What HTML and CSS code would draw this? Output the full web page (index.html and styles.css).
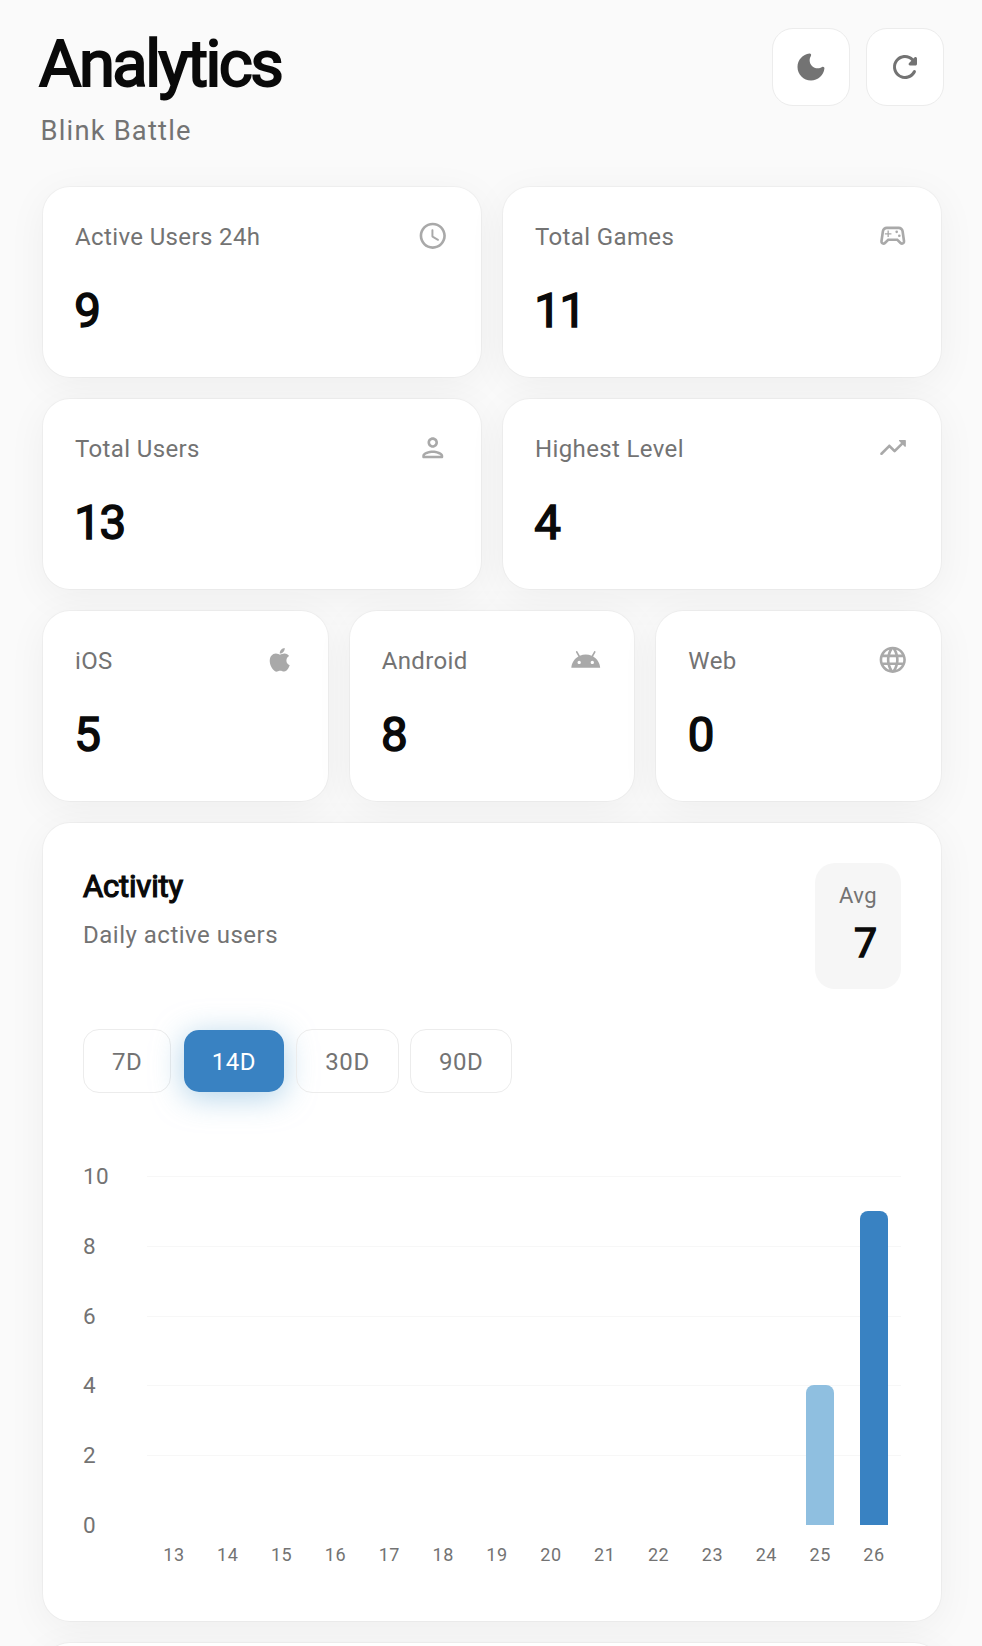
FILE: index.html
```html
<!DOCTYPE html>
<html lang="en">
<head>
  <meta charset="UTF-8">
  <meta name="viewport" content="width=device-width, initial-scale=1.0">
  <title>Analytics - Blink Battle</title>
  <link rel="stylesheet" href="styles.css">
</head>

<body>

  <!-- Header -->
  <header class="header">
    <div class="heading">
      <h1>Analytics</h1>
      <p>Blink Battle</p>
    </div>
    <div class="actions">
      <button class="icon-btn" aria-label="Dark mode">
        <svg viewBox="0 0 24 24"><path d="M11.01 3.05C6.51 3.54 3 7.36 3 12c0 4.97 4.03 9 9 9 4.63 0 8.45-3.5 8.95-8 .09-.79-.78-1.42-1.54-.95-.84.54-1.84.85-2.91.85-2.98 0-5.4-2.42-5.4-5.4 0-1.06.31-2.06.84-2.89.45-.67-.04-1.63-.93-1.56z"/></svg>
      </button>
      <button class="icon-btn" aria-label="Refresh">
        <svg viewBox="0 0 24 24"><path d="M17.65 6.35c-1.63-1.63-3.94-2.57-6.48-2.31-3.67.37-6.69 3.35-7.1 7.02C3.52 15.91 7.27 20 12 20c3.19 0 5.93-1.87 7.21-4.56.32-.67-.16-1.44-.9-1.44-.37 0-.72.2-.88.53-1.13 2.43-3.84 3.97-6.8 3.31-2.22-.49-4.01-2.3-4.48-4.52C5.31 9.44 8.26 6 12 6c1.66 0 3.14.69 4.22 1.78l-1.51 1.51c-.63.63-.19 1.71.7 1.71H19c.55 0 1-.45 1-1V6.41c0-.89-1.08-1.34-1.71-.71l-.64.65z"/></svg>
      </button>
    </div>
  </header>

  <main class="content">
    <!-- Stats -->
    <div class="row">
      <div class="card stat">
        <div class="stat-head">
          <span>Active Users 24h</span>
          <svg viewBox="0 0 24 24"><path d="M11.99 2C6.47 2 2 6.48 2 12s4.47 10 9.99 10C17.52 22 22 17.52 22 12S17.52 2 11.99 2zM12 20c-4.42 0-8-3.58-8-8s3.58-8 8-8 8 3.58 8 8-3.58 8-8 8zm-.22-13h-.06c-.4 0-.72.32-.72.72v4.72c0 .35.18.68.49.86l4.15 2.49c.34.2.78.1.98-.24.21-.34.1-.79-.25-.99l-3.87-2.3V7.72c0-.4-.32-.72-.72-.72z"/></svg>
        </div>
        <div class="value">9</div>
      </div>
      <div class="card stat">
        <div class="stat-head">
          <span>Total Games</span>
          <svg viewBox="0 0 24 24"><path d="M21.58 16.09l-1.09-7.66C20.21 6.46 18.52 5 16.53 5H7.47C5.48 5 3.79 6.46 3.51 8.43l-1.09 7.66C2.2 17.63 3.39 19 4.94 19c.68 0 1.32-.27 1.8-.75L9 16h6l2.25 2.25c.48.48 1.13.75 1.8.75 1.56 0 2.75-1.37 2.53-2.91zm-2.1.72c-.08.1-.2.19-.42.19-.15 0-.29-.06-.39-.16L15.83 14H8.17l-2.84 2.84c-.1.1-.24.16-.39.16-.22 0-.34-.09-.42-.19s-.16-.24-.12-.44l1.09-7.66C5.63 7.74 6.48 7 7.47 7h9.06c.99 0 1.84.74 1.98 1.72l1.09 7.66c.03.2-.05.34-.12.43z"/><path d="M9 8H8v2H6v1h2v2h1v-2h2v-1H9z"/><circle cx="17" cy="12" r="1"/><circle cx="15" cy="9" r="1"/></svg>
        </div>
        <div class="value">11</div>
      </div>
    </div>

    <div class="row">
      <div class="card stat">
        <div class="stat-head">
          <span>Total Users</span>
          <svg viewBox="0 0 24 24"><path d="M12 12c2.21 0 4-1.79 4-4s-1.79-4-4-4-4 1.79-4 4 1.79 4 4 4zm0-6c1.1 0 2 .9 2 2s-.9 2-2 2-2-.9-2-2 .9-2 2-2zm0 8c-2.67 0-8 1.34-8 4v1c0 .55.45 1 1 1h14c.55 0 1-.45 1-1v-1c0-2.66-5.33-4-8-4zm6 4H6v-.01c.2-.72 3.3-1.99 6-1.99s5.8 1.29 6 2z"/></svg>
        </div>
        <div class="value">13</div>
      </div>
      <div class="card stat">
        <div class="stat-head">
          <span>Highest Level</span>
          <svg viewBox="0 0 24 24"><path d="M16.85 6.85l1.44 1.44-4.88 4.88-3.29-3.29c-.39-.39-1.02-.39-1.41 0l-6 6.01c-.39.39-.39 1.02 0 1.41.39.39 1.02.39 1.41 0L9.41 12l3.29 3.29c.39.39 1.02.39 1.41 0l5.59-5.58 1.44 1.44c.31.31.85.09.85-.35V6.5c.01-.28-.21-.5-.49-.5h-4.29c-.45 0-.67.54-.36.85z"/></svg>
        </div>
        <div class="value">4</div>
      </div>
    </div>

    <!-- Platforms -->
    <div class="row">
      <div class="card stat">
        <div class="stat-head">
          <span>iOS</span>
          <svg viewBox="0 0 24 24"><path d="M17.05 20.28c-.98.95-2.05.88-3.08.4-1.09-.5-2.08-.48-3.24 0-1.44.62-2.2.44-3.06-.4C2.79 15.25 3.51 7.59 9.05 7.31c1.35.07 2.29.74 3.08.8 1.18-.24 2.31-.93 3.57-.84 1.51.12 2.65.72 3.4 1.8-3.12 1.87-2.38 5.98.48 7.13-.57 1.5-1.31 2.99-2.54 4.09zM12.03 7.25c-.15-2.23 1.66-4.07 3.74-4.25.29 2.58-2.34 4.5-3.74 4.25z"/></svg>
        </div>
        <div class="value">5</div>
      </div>
      <div class="card stat">
        <div class="stat-head">
          <span>Android</span>
          <svg viewBox="0 0 24 24"><path d="M17.6 9.48l1.84-3.18c.16-.31.04-.69-.26-.85-.29-.15-.65-.06-.83.22l-1.88 3.24c-2.86-1.21-6.08-1.21-8.94 0L5.65 5.67c-.19-.29-.58-.38-.87-.2-.28.18-.37.54-.22.83L6.4 9.48C3.3 11.25 1.28 14.44 1 18h22c-.28-3.56-2.3-6.75-5.4-8.52zM7 15.25c-.69 0-1.25-.56-1.25-1.25s.56-1.25 1.25-1.25 1.25.56 1.25 1.25-.56 1.25-1.25 1.25zm10 0c-.69 0-1.25-.56-1.25-1.25s.56-1.25 1.25-1.25 1.25.56 1.25 1.25-.56 1.25-1.25 1.25z"/></svg>
        </div>
        <div class="value">8</div>
      </div>
      <div class="card stat">
        <div class="stat-head">
          <span>Web</span>
          <svg viewBox="0 0 24 24"><path d="M11.99 2C6.47 2 2 6.48 2 12s4.47 10 9.99 10C17.52 22 22 17.52 22 12S17.52 2 11.99 2zm6.93 6h-2.95c-.32-1.25-.78-2.45-1.38-3.56 1.84.63 3.37 1.91 4.33 3.56zM12 4.04c.83 1.2 1.48 2.53 1.91 3.96h-3.82c.43-1.43 1.08-2.76 1.91-3.96zM4.26 14C4.1 13.36 4 12.69 4 12s.1-1.36.26-2h3.38c-.08.66-.14 1.32-.14 2s.06 1.34.14 2H4.26zm.82 2h2.95c.32 1.25.78 2.45 1.38 3.56-1.84-.63-3.37-1.9-4.33-3.56zm2.95-8H5.08c.96-1.66 2.49-2.93 4.33-3.56C8.81 5.55 8.35 6.75 8.03 8zM12 19.96c-.83-1.2-1.48-2.53-1.91-3.96h3.82c-.43 1.43-1.08 2.76-1.91 3.96zM14.34 14H9.66c-.09-.66-.16-1.32-.16-2s.07-1.35.16-2h4.68c.09.65.16 1.32.16 2s-.07 1.34-.16 2zm.25 5.56c.6-1.11 1.06-2.31 1.38-3.56h2.95c-.96 1.65-2.49 2.93-4.33 3.56zM16.36 14c.08-.66.14-1.32.14-2s-.06-1.34-.14-2h3.38c.16.64.26 1.31.26 2s-.1 1.36-.26 2h-3.38z"/></svg>
        </div>
        <div class="value">0</div>
      </div>
    </div>

    <!-- Activity chart -->
    <section class="card activity">
      <div class="activity-head">
        <div>
          <h2>Activity</h2>
          <p>Daily active users</p>
        </div>
        <div class="avg">
          <span>Avg</span>
          <strong>7</strong>
        </div>
      </div>

      <div class="ranges">
        <button class="range">7D</button>
        <button class="range active">14D</button>
        <button class="range">30D</button>
        <button class="range">90D</button>
      </div>

      <div class="chart">
        <div class="y-axis">
          <span>10</span>
          <span>8</span>
          <span>6</span>
          <span>4</span>
          <span>2</span>
          <span>0</span>
        </div>
        <div class="plot">
          <div class="grid-lines"><i></i><i></i><i></i><i></i><i></i></div>
          <div class="bars">
            <div class="bar past" style="height: 40%"></div>
            <div class="bar today" style="height: 90%"></div>
          </div>
        </div>
        <div class="x-axis">
          <span>13</span>
          <span>14</span>
          <span>15</span>
          <span>16</span>
          <span>17</span>
          <span>18</span>
          <span>19</span>
          <span>20</span>
          <span>21</span>
          <span>22</span>
          <span>23</span>
          <span>24</span>
          <span>25</span>
          <span>26</span>
        </div>
      </div>
    </section>

    <!-- Next section, continues below the fold -->
    <section class="card next"></section>
  </main>

</body>
</html>
```
FILE: styles.css
```css
* {
    box-sizing: border-box;
    margin: 0;
    padding: 0;
}

body {
    height: 1646px;
    overflow: hidden;
    background: #fafafa;
    color: #0a0a0a;
    font-family: Roboto, sans-serif;
    font-weight: 400;
}

svg {
    display: block;
    fill: currentColor;
}

button {
    font-family: inherit;
    background: #fff;
    border: 1px solid #ececec;
}

/* Header */
.header {
    display: flex;
    justify-content: space-between;
    align-items: flex-start;
    height: 187px;
    padding: 28px 38px 0 39px;
}

h1 {
    margin-top: -1px;
    font-size: 65px;
    font-weight: 400;
    line-height: 74px;
    letter-spacing: -2.5px;
    -webkit-text-stroke: 2px #0a0a0a;
}

.heading p {
    margin-top: 13px;
    padding-left: 1.5px;
    font-size: 27.3px;
    line-height: 34px;
    letter-spacing: 1.2px;
    color: #737373;
}

.actions {
    display: flex;
    gap: 16px;
}

.icon-btn {
    display: flex;
    align-items: center;
    justify-content: center;
    width: 78px;
    height: 78px;
    border-radius: 21px;
    color: #737373;
}

.icon-btn svg {
    width: 36px;
    height: 36px;
}

/* Cards */
.content {
    display: flex;
    flex-direction: column;
    gap: 22px;
    padding: 0 41px 0 43px;
}

.row {
    display: flex;
    gap: 22px;
}

.card {
    background: #fff;
    border-radius: 27px;
    box-shadow: 0 0 0 1px rgba(0, 0, 0, 0.03), 0 8px 40px rgba(0, 0, 0, 0.05);
}

.stat {
    flex: 1;
    height: 190px;
    padding: 33px 32px;
}

.stat-head {
    display: flex;
    justify-content: space-between;
    align-items: center;
    height: 32px;
    font-size: 24px;
    letter-spacing: 0.37px;
    color: #737373;
}

.stat-head span {
    padding-top: 2px;
}

.stat-head svg {
    width: 31.5px;
    height: 31.5px;
    margin-right: 0.5px;
    color: #a9a9a9;
}

.value {
    margin-top: 31px;
    font-size: 47.5px;
    line-height: 56px;
    letter-spacing: -1.5px;
    text-indent: -0.7px;
    -webkit-text-stroke: 1.5px #0a0a0a;
}

/* Activity */
.activity {
    height: 798px;
    padding: 40px 40px 0;
}

.activity-head {
    display: flex;
    justify-content: space-between;
    height: 126px;
}

h2 {
    margin-top: 6px;
    font-size: 31px;
    font-weight: 400;
    line-height: 36px;
    letter-spacing: -0.2px;
    -webkit-text-stroke: 1.2px #0a0a0a;
}

.activity-head p {
    margin-top: 15px;
    font-size: 24px;
    line-height: 30px;
    letter-spacing: 0.5px;
    color: #737373;
}

.avg {
    display: flex;
    flex-direction: column;
    align-items: flex-end;
    width: 86px;
    padding: 19px 24px 0;
    border-radius: 20px;
    background: #f6f6f6;
}

.avg span {
    font-size: 22px;
    line-height: 28px;
    letter-spacing: 0.4px;
    color: #737373;
}

.avg strong {
    margin-top: 8px;
    font-size: 41px;
    font-weight: 400;
    line-height: 50px;
    -webkit-text-stroke: 1.4px #0a0a0a;
}

.ranges {
    display: flex;
    gap: 11.3px;
    margin-top: 40px;
}

.range {
    height: 64px;
    padding: 2px 28px 0;
    border-radius: 16px;
    font-size: 24px;
    letter-spacing: 0.55px;
    color: #737373;
    background: transparent;
}

.range.active {
    color: #fff;
    background: #3982c2;
    background-clip: padding-box;
    border-color: transparent;
    box-shadow: 0 5px 30px rgba(142, 190, 223, 0.65);
}

/* Chart */
.chart {
    display: grid;
    grid-template-columns: 64px 1fr;
    margin-top: 69px;
}

.y-axis {
    display: flex;
    flex-direction: column;
    justify-content: space-between;
    height: 377px;
    font-size: 22.5px;
    line-height: 28px;
    letter-spacing: 0.3px;
    color: #737373;
}

.plot {
    display: grid;
    height: 349px;
    margin-top: 14px;
}

.grid-lines,
.bars {
    grid-area: 1 / 1;
}

.grid-lines {
    display: grid;
    grid-template-rows: repeat(5, 1fr);
}

.grid-lines i {
    border-top: 1px solid #f7f7f7;
}

.bars {
    display: flex;
    justify-content: flex-end;
    align-items: flex-end;
    gap: 26px;
    padding-right: 13px;
}

.bar {
    width: 28px;
    border-radius: 8px 8px 0 0;
}

.past {
    background: #8fbfe0;
}

.today {
    background: #3982c2;
}

.x-axis {
    grid-column: 2;
    display: grid;
    grid-template-columns: repeat(14, 1fr);
    margin-top: 5px;
    font-size: 18px;
    line-height: 22px;
    letter-spacing: 0.6px;
    text-align: center;
    color: #737373;
}

.next {
    height: 200px;
}
```
